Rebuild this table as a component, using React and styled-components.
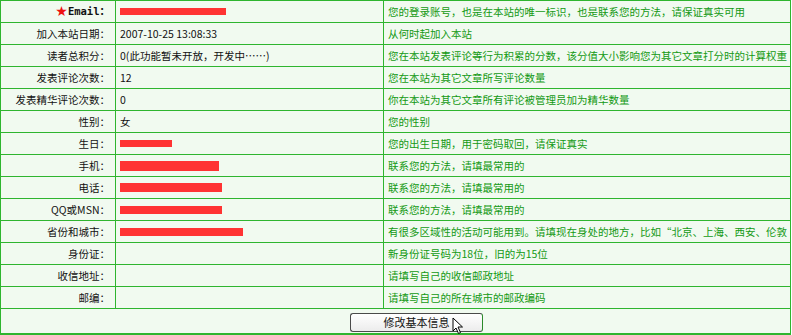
import styled, { createGlobalStyle } from "styled-components";

const GlobalStyle = createGlobalStyle`
  html, body {
    margin: 0;
    padding: 0;
    background: #ffffff;
  }
  body {
    font-family: "Noto Sans CJK SC", "DejaVu Sans", sans-serif;
    font-size: 10.5px;
  }
`;

const rows = [
  {
    label: "Email：",
    star: true,
    bar: { w: 106, h: 7 },
    desc: "您的登录账号，也是在本站的唯一标识，也是联系您的方法，请保证真实可用",
  },
  { label: "加入本站日期：", value: "2007-10-25 13:08:33", desc: "从何时起加入本站" },
  {
    label: "读者总积分：",
    value: "0(此功能暂未开放，开发中……)",
    desc: "您在本站发表评论等行为积累的分数，该分值大小影响您为其它文章打分时的计算权重",
  },
  { label: "发表评论次数：", value: "12", desc: "您在本站为其它文章所写评论数量" },
  { label: "发表精华评论次数：", value: "0", desc: "你在本站为其它文章所有评论被管理员加为精华数量" },
  { label: "性别：", value: "女", desc: "您的性别" },
  { label: "生日：", bar: { w: 52, h: 7 }, desc: "您的出生日期，用于密码取回，请保证真实" },
  { label: "手机：", bar: { w: 99, h: 10 }, desc: "联系您的方法，请填最常用的" },
  { label: "电话：", bar: { w: 102, h: 9 }, desc: "联系您的方法，请填最常用的" },
  { label: "QQ或MSN：", bar: { w: 102, h: 8 }, desc: "联系您的方法，请填最常用的" },
  {
    label: "省份和城市：",
    bar: { w: 123, h: 8 },
    desc: "有很多区域性的活动可能用到。请填现在身处的地方，比如“北京、上海、西安、伦敦",
  },
  { label: "身份证：", desc: "新身份证号码为18位，旧的为15位" },
  { label: "收信地址：", desc: "请填写自己的收信邮政地址" },
  { label: "邮编：", desc: "请填写自己的所在城市的邮政编码" },
];

export default function App() {
  return (
    <>
      <GlobalStyle />
      <Table>
        {rows.map((r) => (
          <Row key={r.label}>
            <Label $bold={r.star}>
              {r.star && <Star>★</Star>}
              {r.label}
            </Label>
            <Value>
              {r.bar ? <Redact $w={r.bar.w} $h={r.bar.h} /> : r.value}
            </Value>
            <Desc>{r.desc}</Desc>
          </Row>
        ))}
        <ButtonRow>
          <SubmitButton type="button">
            修改基本信息
            <Cursor viewBox="0 0 12 18" width="12" height="18">
              <path
                d="M1 1 L1 14 L4 11 L6.5 16.5 L8.5 15.5 L6 10 L10.5 10 Z"
                fill="#ffffff"
                stroke="#000000"
                strokeWidth="1"
              />
            </Cursor>
          </SubmitButton>
        </ButtonRow>
      </Table>
    </>
  );
}

const Table = styled.div`
  width: 791px;
  box-sizing: border-box;
  display: grid;
  grid-template-columns: 114px 267px 406px;
  gap: 1px;
  padding: 1px 1px 2px 1px;
  background: #2fb52f;
  overflow: hidden;
`;

const Row = styled.div`
  display: contents;
`;

const Cell = styled.div`
  height: 21px;
  display: flex;
  align-items: center;
  background: #f1faf0;
  white-space: nowrap;
  overflow: hidden;
  line-height: 21px;
`;

const Label = styled(Cell)`
  justify-content: flex-end;
  padding-right: 5px;
  color: #111111;
  font-weight: ${(p) => (p.$bold ? 700 : 400)};
  font-family: ${(p) =>
    p.$bold
      ? '"DejaVu Sans Mono", "Noto Sans CJK SC", monospace'
      : '"Noto Sans CJK SC", sans-serif'};
`;

const Star = styled.span`
  color: #ee1111;
  font-size: 14px;
  font-family: "DejaVu Sans", sans-serif;
`;

const Value = styled(Cell)`
  padding-left: 4px;
  color: #111111;
`;

const Redact = styled.span`
  display: inline-block;
  width: ${(p) => p.$w}px;
  height: ${(p) => p.$h}px;
  background: #ff3333;
`;

const Desc = styled(Cell)`
  padding-left: 4px;
  color: #139913;
`;

const ButtonRow = styled.div`
  grid-column: 1 / -1;
  height: 24px;
  background: #f1faf0;
  display: flex;
  align-items: center;
  padding-left: 349px;
`;

const SubmitButton = styled.button`
  position: relative;
  width: 133px;
  height: 19px;
  margin-top: 3px;
  padding: 0;
  border: 1px solid #4a4a4a;
  border-right-color: #2a8a2a;
  border-radius: 3px;
  background: linear-gradient(#ffffff, #ececec);
  color: #111111;
  font-family: "Noto Sans CJK SC", sans-serif;
  font-size: 11px;
  line-height: 17px;
  text-align: center;
`;

const Cursor = styled.svg`
  position: absolute;
  left: 101px;
  top: 3px;
`;
